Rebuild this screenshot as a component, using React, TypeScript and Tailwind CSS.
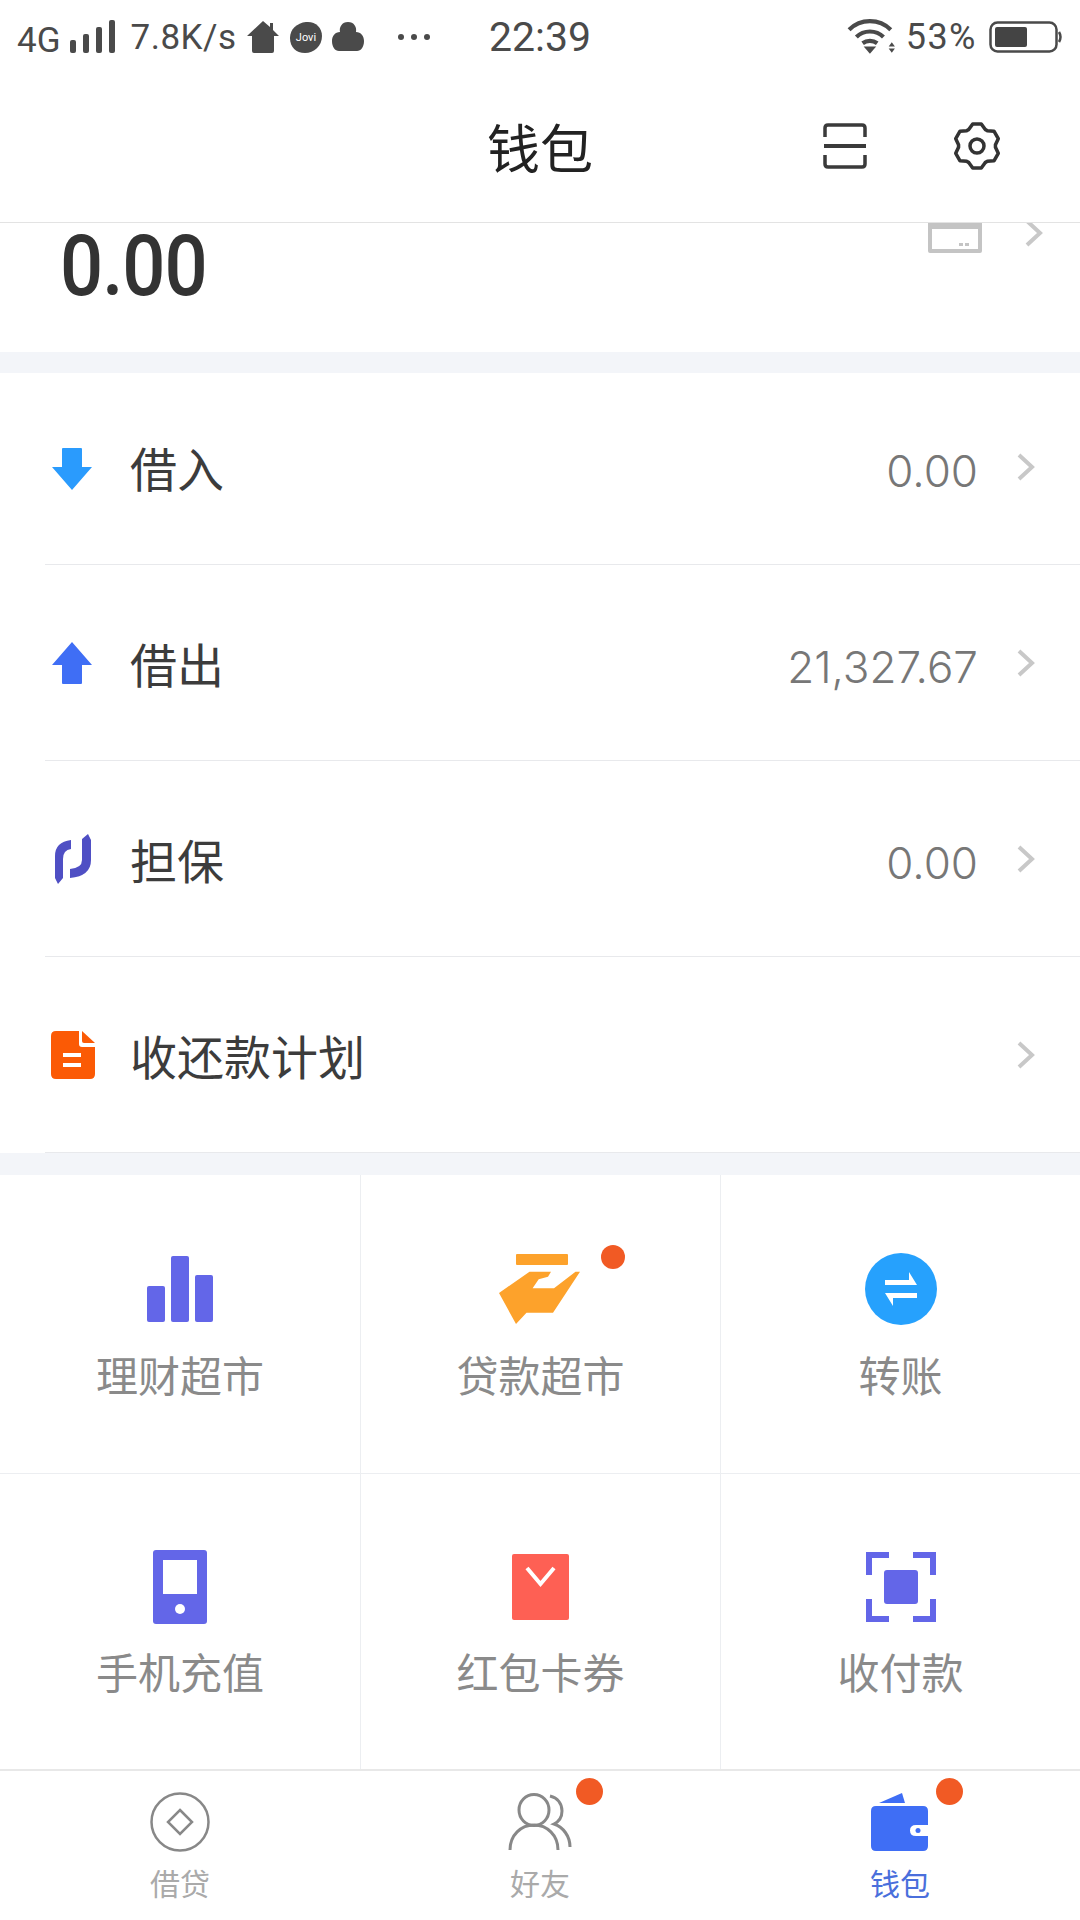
import React from "react";

const cjk = "font-['Noto_Sans_CJK_SC','Noto_Sans',sans-serif]";

function Chevron({ className = "" }: { className?: string }) {
  return (
    <svg width="20" height="28" viewBox="0 0 20 28" className={className}>
      <path d="M3 2 L16 14 L3 26" fill="none" stroke="#c8c8c8" strokeWidth="4" />
    </svg>
  );
}

function Dot({ className }: { className: string }) {
  return <span className={`absolute rounded-full bg-[#f15a24] ${className}`} />;
}

function gearPoints() {
  const pts: string[] = [];
  for (let i = 0; i < 6; i++) {
    const a = i * 60 - 90;
    const add = (deg: number, r: number) => {
      const t = (deg * Math.PI) / 180;
      pts.push(`${(25 + r * Math.cos(t)).toFixed(2)},${(25 + r * Math.sin(t)).toFixed(2)}`);
    };
    add(a - 26, 18.5);
    add(a - 11, 22.5);
    add(a + 11, 22.5);
    add(a + 26, 18.5);
  }
  return pts.join(" ");
}

function Row({ icon, label, value }: { icon: React.ReactNode; label: string; value?: string }) {
  return (
    <div className="h-[196px] pl-[45px] flex">
      <div className="flex-1 flex items-center border-b border-[#e8e9ec]">
        <div className="w-[85px] flex items-center pl-[6px] h-[56px]">{icon}</div>
        <span className={`${cjk} text-[47px] leading-none text-[#3c3c3c]`}>{label}</span>
        <span className="ml-auto pt-[8px] font-['Inter',sans-serif] font-light text-[44px] leading-none text-[#777777]">{value}</span>
        <Chevron className="ml-[38px] mr-[44px]" />
      </div>
    </div>
  );
}

function Cell({
  icon,
  label,
  mid,
  badge,
  top,
}: {
  icon: React.ReactNode;
  label: string;
  mid?: boolean;
  badge?: boolean;
  top?: boolean;
}) {
  return (
    <div
      className={`flex flex-col items-center ${top ? "pt-[76px] border-b border-[#eceef1]" : "pt-[75px]"} ${
        mid ? "border-x border-[#eceef1]" : ""
      }`}
    >
      <div className="relative h-[76px] flex items-center justify-center">
        {icon}
        {badge && <Dot className="w-[24px] h-[24px] left-[99px] top-[-6px]" />}
      </div>
      <span className={`${cjk} ${top ? "mt-[19px]" : "mt-[18px]"} text-[42px] leading-[56px] text-[#8a8a8a]`}>{label}</span>
    </div>
  );
}

function Tab({ icon, label, active, badge }: { icon: React.ReactNode; label: string; active?: boolean; badge?: string }) {
  return (
    <div className="flex-1 flex flex-col items-center pt-[21px]">
      <div className="relative h-[60px] flex items-center justify-center">
        {icon}
        {badge && <Dot className={`w-[27px] h-[27px] top-[-14px] ${badge}`} />}
      </div>
      <span className={`${cjk} mt-[12px] text-[30px] leading-[36px] ${active ? "text-[#4a6fdc]" : "text-[#aaaaaa]"}`}>{label}</span>
    </div>
  );
}

export default function App() {
  return (
    <div className="w-[1080px] h-[1920px] bg-white overflow-hidden flex flex-col">
      {/* status bar */}
      <div className="h-[70px] flex items-center text-[#4a4a4a] font-['Roboto',sans-serif]">
        <div className="w-[436px] flex items-center pl-[17px] pt-[4px]">
          <span className="text-[35px] leading-none pt-[6px]">4G</span>
          <svg width="46" height="34" viewBox="0 0 46 34" className="ml-[9px]">
            <rect x="0" y="20" width="6" height="13" rx="2" fill="#4a4a4a" />
            <rect x="13" y="14" width="6" height="19" rx="2" fill="#4a4a4a" />
            <rect x="26" y="7" width="6" height="26" rx="2" fill="#4a4a4a" />
            <rect x="39" y="0" width="6" height="33" rx="2" fill="#4a4a4a" />
          </svg>
          <span className="ml-[15px] text-[35px] leading-none tracking-[0.5px]">7.8K/s</span>
          <svg width="34" height="34" viewBox="0 0 34 34" className="ml-[9px]">
            <path d="M17 1 L24 7 V3 H27 V10 L33 16 H28 V31 Q28 33 26 33 H8 Q6 33 6 31 V16 H1 Z" fill="#4a4a4a" />
          </svg>
          <svg width="32" height="32" viewBox="0 0 32 32" className="ml-[10px]">
            <path d="M16 1 C25 0 32 6 32 15 C32 25 24 32 15 32 C6 32 0 26 0 17 C0 8 7 2 16 1 Z" fill="#4a4a4a" />
            <text x="16" y="20" textAnchor="middle" fontSize="11" fill="#fff" fontFamily="Roboto">Jovi</text>
          </svg>
          <svg width="34" height="32" viewBox="0 0 34 32" className="ml-[9px]">
            <path d="M17 1 C23 1 26 6 25 11 C30 11 33 15 33 20 C33 26 30 30 26 30 H8 C4 30 1 26 1 20 C1 15 4 11 9 11 C8 6 11 1 17 1 Z" fill="#4a4a4a" />
          </svg>
          <svg width="34" height="8" viewBox="0 0 34 8" className="ml-[32px]">
            <circle cx="4" cy="4" r="3" fill="#4a4a4a" />
            <circle cx="17" cy="4" r="3" fill="#4a4a4a" />
            <circle cx="30" cy="4" r="3" fill="#4a4a4a" />
          </svg>
        </div>
        <span className="w-[208px] text-center text-[41px] leading-none pt-[4px]">22:39</span>
        <div className="flex-1 flex items-center justify-end pr-[17px] pt-[4px]">
          <svg width="50" height="36" viewBox="0 0 48 34">
            <path d="M2 10 C13 -1 31 -1 42 10 M9 17 C16 10 28 10 35 17 M15 23 C19 20 25 20 29 23" fill="none" stroke="#4a4a4a" strokeWidth="4" />
            <path d="M16 26 H28 L22 33 Z" fill="#4a4a4a" />
            <path d="M43 22 L46 26 H40 Z M40 28 H46 L43 32 Z" fill="#4a4a4a" />
          </svg>
          <span className="ml-[9px] text-[36px] leading-none tracking-[1.5px]">53%</span>
          <svg width="74" height="32" viewBox="0 0 74 32" className="ml-[12px]">
            <rect x="1.5" y="1.5" width="66" height="29" rx="7" fill="none" stroke="#4a4a4a" strokeWidth="2.5" />
            <rect x="6" y="6" width="32" height="20" rx="2" fill="#444444" />
            <path d="M70 11 Q73 16 70 21" fill="none" stroke="#4a4a4a" strokeWidth="2.5" />
          </svg>
        </div>
      </div>

      {/* header */}
      <div className="h-[153px] border-b border-[#e3e3e3] flex items-center">
        <div className="w-[436px]" />
        <span className={`${cjk} w-[208px] text-center text-[53px] leading-none text-[#222222]`}>钱包</span>
        <div className="flex-1 flex items-center pl-[179px]">
          <svg width="44" height="46" viewBox="0 0 44 46">
            <path d="M2 14 V5 Q2 2 5 2 H39 Q42 2 42 5 V14 M2 32 V41 Q2 44 5 44 H39 Q42 44 42 41 V32" fill="none" stroke="#3a3a3a" strokeWidth="3.5" />
            <rect x="1" y="21" width="42" height="4" fill="#3a3a3a" />
          </svg>
          <svg width="50" height="50" viewBox="0 0 50 50" className="ml-[85px]">
            <polygon points={gearPoints()} fill="none" stroke="#333333" strokeWidth="3.5" strokeLinejoin="round" />
            <circle cx="25" cy="25" r="7" fill="none" stroke="#333333" strokeWidth="3.5" />
          </svg>
        </div>
      </div>

      {/* balance */}
      <div className="h-[129px] flex">
        <div className="pl-[60px] pt-[1px]">
          <span className="block font-['Roboto',sans-serif] font-medium text-[76px] leading-[74px] text-[#333333] tracking-[-1px] origin-top-left scale-y-[1.12]">0.00</span>
        </div>
        <div className="ml-auto h-[40px] overflow-hidden flex items-start pr-[36px]">
          <div className="w-[54px] h-[30px] border-[4px] border-t-[6px] border-[#c4c4c4] rounded-b-[2px] flex items-end justify-end gap-[2px] pr-[9px] pb-[3px]">
            <span className="w-[4px] h-[3px] bg-[#c4c4c4]" />
            <span className="w-[4px] h-[3px] bg-[#c4c4c4]" />
          </div>
          <Chevron className="ml-[42px] -mt-[4px]" />
        </div>
      </div>
      <div className="h-[21px] bg-[#f3f5f9]" />

      {/* list */}
      <div className="-mt-[4px]">
        <Row
          label="借入"
          value="0.00"
          icon={
            <svg width="42" height="44" viewBox="0 0 42 44" className="mt-[4px]">
              <path d="M11 2 Q11 1 12 1 H30 Q31 1 31 2 V20 H41 L21 43 L1 20 H11 Z" fill="#2a9bfd" />
            </svg>
          }
        />
        <Row
          label="借出"
          value="21,327.67"
          icon={
            <svg width="42" height="44" viewBox="0 0 42 44">
              <path d="M11 42 Q11 43 12 43 H30 Q31 43 31 42 V24 H41 L21 1 L1 24 H11 Z" fill="#3f6ef5" />
            </svg>
          }
        />
        <Row
          label="担保"
          value="0.00"
          icon={
            <svg width="38" height="50" viewBox="0 0 38 50" className="ml-[3px]">
              <path d="M1 44 V22 Q1 8 17 6 V15 Q9 16 9 25 V44 L4 50 Z" fill="#4f4fc4" />
              <path d="M37 6 V26 Q37 42 16 44 V35 Q28 34 28 26 V5 L34 0 Z" fill="#4f4fc4" />
            </svg>
          }
        />
        <Row
          label="收还款计划"
          icon={
            <svg width="44" height="48" viewBox="0 0 44 48">
              <path d="M5 0 H28 V13 Q28 16 31 16 H44 V43 Q44 48 39 48 H5 Q0 48 0 43 V5 Q0 0 5 0 Z" fill="#fb5a05" />
              <path d="M31 0 L44 12 H33 Q31 12 31 10 Z" fill="#fb5a05" />
              <rect x="12" y="22" width="18" height="4" fill="#fff" />
              <rect x="12" y="32" width="18" height="4" fill="#fff" />
            </svg>
          }
        />
      </div>
      <div className="h-[22px] bg-[#f3f5f9]" />

      {/* grid */}
      <div className="grid grid-cols-[360px_361px_359px] grid-rows-[299px_295px]">
        <Cell
          top
          label="理财超市"
          icon={
            <svg width="66" height="66" viewBox="0 0 66 66">
              <rect x="0" y="30" width="18" height="36" rx="2" fill="#6366e8" />
              <rect x="24" y="0" width="18" height="66" rx="2" fill="#6366e8" />
              <rect x="48" y="19" width="18" height="47" rx="2" fill="#6366e8" />
            </svg>
          }
        />
        <Cell
          top
          mid
          badge
          label="贷款超市"
          icon={
            <svg width="84" height="70" viewBox="0 0 84 70" className="-ml-[6px]">
              <rect x="20" y="0" width="52" height="11" rx="1" fill="#fda22b" />
              <path d="M33.5 17.7 H55 L52 22.7 L42.7 25.3 L36.6 34.3 H58 L79.5 17.7 H84 L57 58.7 H30.5 L20 70 L3 39 Z" fill="#fda22b" />
            </svg>
          }
        />
        <Cell
          top
          label="转账"
          icon={
            <svg width="72" height="72" viewBox="0 0 72 72">
              <circle cx="36" cy="36" r="36" fill="#26a1fd" />
              <path d="M20 27 H44 V19 L52 32 H20 Z" fill="#fff" />
              <path d="M52 45 H28 V53 L20 40 H52 Z" fill="#fff" />
            </svg>
          }
        />
        <Cell
          label="手机充值"
          icon={
            <svg width="54" height="74" viewBox="0 0 54 74">
              <rect x="0" y="0" width="54" height="74" rx="3" fill="#6366e8" />
              <rect x="10" y="10" width="34" height="34" fill="#fff" />
              <circle cx="27" cy="59" r="5" fill="#fff" />
            </svg>
          }
        />
        <Cell
          mid
          label="红包卡券"
          icon={
            <svg width="57" height="66" viewBox="0 0 57 66">
              <rect x="0" y="0" width="57" height="66" rx="2" fill="#fe6054" />
              <path d="M15 14 L28.5 30 L42 14" fill="none" stroke="#fff" strokeWidth="4" />
            </svg>
          }
        />
        <Cell
          label="收付款"
          icon={
            <svg width="70" height="70" viewBox="0 0 70 70">
              <path d="M23 3 H3 V23 M47 3 H67 V23 M23 67 H3 V47 M47 67 H67 V47" fill="none" stroke="#6366e8" strokeWidth="6" />
              <rect x="18" y="18" width="34" height="34" rx="3" fill="#6366e8" />
            </svg>
          }
        />
      </div>

      {/* tabbar */}
      <div className="flex-1 border-t-2 border-[#e8e8e8] flex">
        <Tab
          label="借贷"
          icon={
            <svg width="60" height="60" viewBox="0 0 60 60">
              <circle cx="30" cy="30" r="28.5" fill="none" stroke="#888888" strokeWidth="2.5" />
              <path d="M30 18 L42 30 L30 42 L18 30 Z" fill="none" stroke="#888888" strokeWidth="2.5" />
            </svg>
          }
        />
        <Tab
          badge="left-[68px]"
          label="好友"
          icon={
            <svg width="64" height="58" viewBox="0 0 64 58">
              <ellipse cx="26" cy="17" rx="15" ry="15.5" fill="none" stroke="#888888" strokeWidth="3" />
              <path d="M2 57 C2 42 13 32 26 32 C39 32 50 42 50 57" fill="none" stroke="#888888" strokeWidth="3" />
              <path d="M42 3 C50 5 54 11 54 18 C54 25 50 29 46 31 C55 34 62 43 62 54" fill="none" stroke="#888888" strokeWidth="3" />
            </svg>
          }
        />
        <Tab
          active
          badge="left-[65px]"
          label="钱包"
          icon={
            <svg width="58" height="60" viewBox="0 0 58 60">
              <path d="M8 11 L31 1 L34 11 Z" fill="#3f6ef5" />
              <path d="M5 14 H52 Q57 14 57 19 V33 H45 Q39 33 39 38.5 Q39 44 45 44 H57 V54 Q57 59 52 59 H5 Q0 59 0 54 V19 Q0 14 5 14 Z" fill="#3f6ef5" />
              <circle cx="47" cy="38.5" r="2.5" fill="#3f6ef5" />
            </svg>
          }
        />
      </div>
    </div>
  );
}
